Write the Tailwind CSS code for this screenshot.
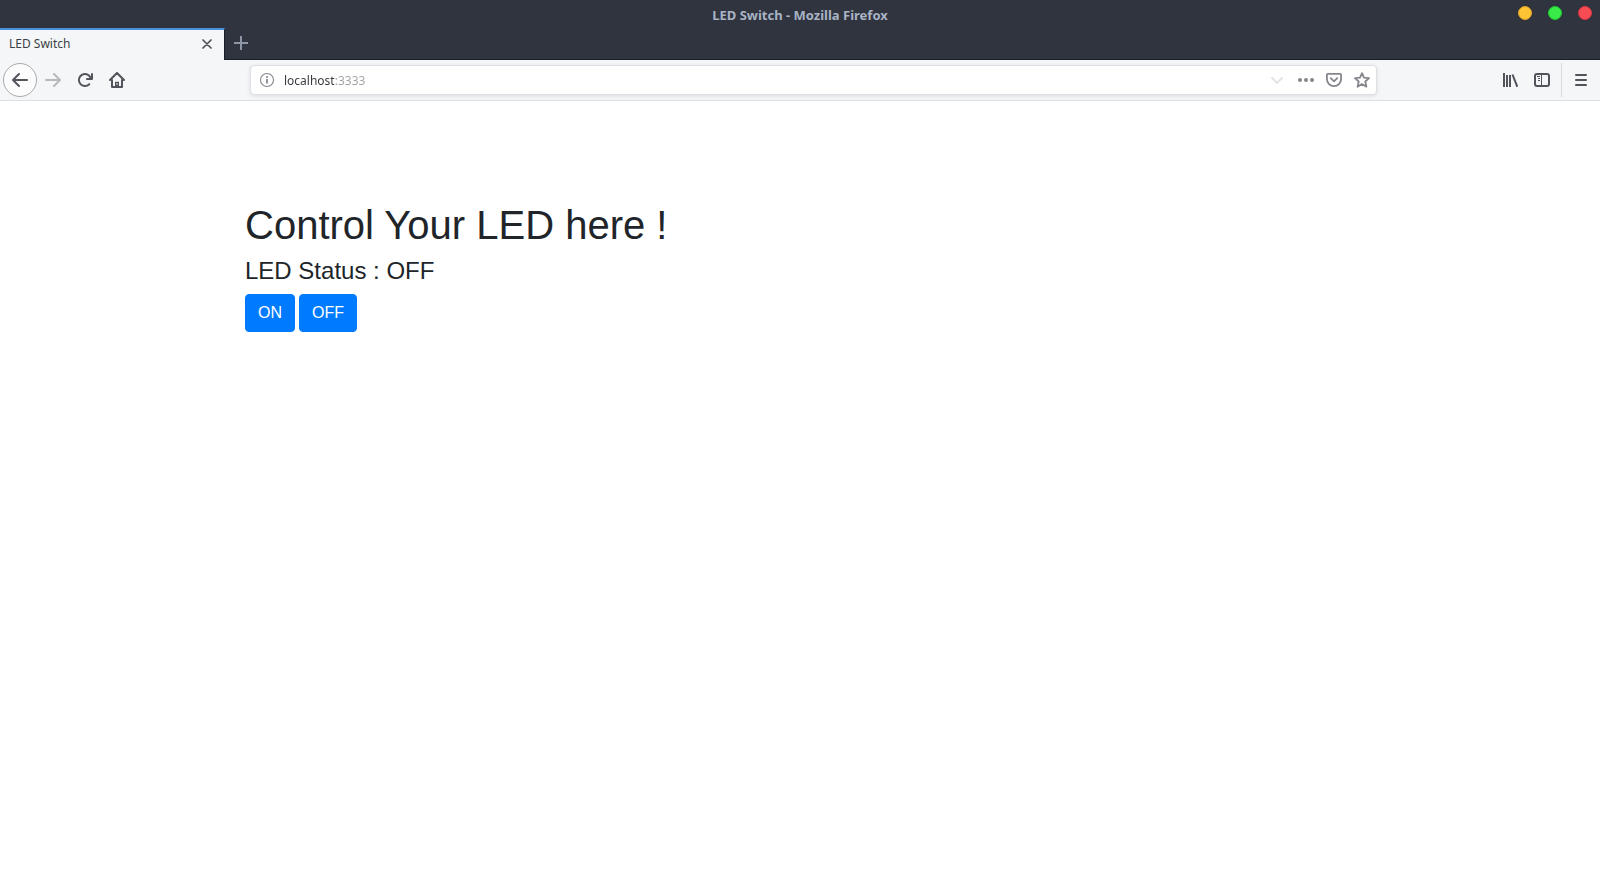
<!DOCTYPE html>
<html lang="en">
<head>
<meta charset="utf-8">
<meta name="viewport" content="width=device-width, initial-scale=1">
<title>LED Switch - Mozilla Firefox</title>
<script src="https://cdn.jsdelivr.net/npm/@tailwindcss/browser@4"></script>
</head>
<body class="min-h-screen bg-white font-['Noto_Sans',sans-serif] text-xs">
<header>
  <!-- Title bar -->
  <div class="grid h-7 grid-cols-[1fr_auto_1fr] items-end bg-[#2f343f] px-2">
    <span></span>
    <p class="text-[13px] leading-[26px] font-bold text-[#a9b3c4]">LED Switch - Mozilla Firefox</p>
    <div class="flex h-[26px] items-center justify-end gap-4 self-start">
      <button aria-label="Minimize" class="size-3.5 rounded-full border border-[#e0a325] bg-[#fdc435]"></button>
      <button aria-label="Maximize" class="size-3.5 rounded-full border border-[#1fc92f] bg-[#38eb49]"></button>
      <button aria-label="Close" class="size-3.5 rounded-full border border-[#dd3440] bg-[#f84c55]"></button>
    </div>
  </div>

  <!-- Tab strip -->
  <div class="flex h-8 bg-[#2f343f]">
    <div class="flex w-[225px] items-center justify-between border-t-2 border-r border-t-[#4a90d9] border-r-[#1c1f26] bg-[#f5f6f7] pr-3 pb-0.5 pl-[9px]">
      <span class="text-[#3b3e45]">LED Switch</span>
      <button aria-label="Close tab" class="text-[#4e5157]">
        <svg class="size-2.5" viewBox="0 0 10 10" fill="none" stroke="currentColor" stroke-width="1.7" stroke-linecap="round"><path d="M1 1l8 8M9 1l-8 8"/></svg>
      </button>
    </div>
    <div class="flex flex-1 items-center border-b border-[#1c1f26] pb-0.5 pl-[9px]">
      <button aria-label="New tab" class="text-[#8d97a8]">
        <svg class="size-3.5" viewBox="0 0 14 14" fill="none" stroke="currentColor" stroke-width="2"><path d="M7 0v14M0 7h14"/></svg>
      </button>
    </div>
  </div>

  <!-- Navigation toolbar -->
  <nav class="flex h-[41px] items-center border-b border-[#dcdfe6] bg-[#f5f6f8] pr-[11px] pl-[3px] text-[#53545b]">
    <button aria-label="Back" class="flex size-[34px] items-center justify-center rounded-full border border-[#a9aaad] bg-[#fcfcfd]">
      <svg class="size-4" viewBox="0 0 16 16" fill="currentColor"><path d="M15 7H3.414l4.293-4.293a1 1 0 0 0-1.414-1.414l-6 6a1 1 0 0 0 0 1.414l6 6a1 1 0 0 0 1.414-1.414L3.414 9H15a1 1 0 0 0 0-2z"/></svg>
    </button>
    <button aria-label="Forward" disabled class="ml-2 text-[#b8b9bc]">
      <svg class="size-4" viewBox="0 0 16 16" fill="currentColor"><path d="M1 7h11.586L8.293 2.707a1 1 0 0 1 1.414-1.414l6 6a1 1 0 0 1 0 1.414l-6 6a1 1 0 0 1-1.414-1.414L12.586 9H1a1 1 0 0 1 0-2z"/></svg>
    </button>
    <button aria-label="Reload" class="ml-4">
      <svg class="size-4" viewBox="0 0 16 16" fill="currentColor"><path d="M15 1a1 1 0 0 0-1 1v2.418A6.995 6.995 0 1 0 8 15a6.954 6.954 0 0 0 4.95-2.05 1 1 0 0 0-1.414-1.414A5.019 5.019 0 1 1 12.549 6H10a1 1 0 0 0 0 2h5a1 1 0 0 0 1-1V2a1 1 0 0 0-1-1z"/></svg>
    </button>
    <button aria-label="Home" class="ml-4">
      <svg class="size-4" viewBox="0 0 16 16" fill="none" stroke="currentColor" stroke-width="2" stroke-linecap="round" stroke-linejoin="round"><path d="M1 8l7-7 7 7M3 8v7h10V8"/><path d="M6 15v-5.2h4V15z" fill="currentColor" stroke="none"/><path d="M8 11.5v1" stroke="#f5f6f8" stroke-width="1"/></svg>
    </button>

    <div class="mr-[125px] ml-[125px] flex h-[30px] flex-1 items-center rounded-sm border border-[#dcdfe3] bg-white pr-1.5 pl-2 text-[#85868b] shadow-[0_1px_4px_rgba(0,0,0,0.1)]">
      <button aria-label="Site information">
        <svg class="size-4" viewBox="0 0 16 16" fill="none" stroke="currentColor"><circle cx="8" cy="8" r="6.5" stroke-width="1.1"/><path d="M8 7v4.5" stroke-width="1.8"/><circle cx="8" cy="4.9" r="1" fill="currentColor" stroke="none"/></svg>
      </button>
      <input aria-label="Address" type="text" value="localhost:3333" class="ml-[9px] h-5 min-w-0 flex-1 bg-linear-to-r from-[#35363b] from-[51px] to-[#a0a1a5] to-[51px] bg-clip-text text-transparent caret-[#35363b] outline-none">
      <button aria-label="Show history" class="text-[#e4e4e6]">
        <svg class="size-4" viewBox="0 0 16 16" fill="none" stroke="currentColor" stroke-width="2" stroke-linecap="round" stroke-linejoin="round"><path d="M3 6l5 5 5-5"/></svg>
      </button>
      <button aria-label="Page actions" class="ml-[13px]">
        <svg class="size-4" viewBox="0 0 16 16" fill="currentColor"><circle cx="2" cy="8" r="2"/><circle cx="8" cy="8" r="2"/><circle cx="14" cy="8" r="2"/></svg>
      </button>
      <button aria-label="Save to Pocket" class="ml-3">
        <svg class="size-4" viewBox="0 0 16 16" fill="none" stroke="currentColor" stroke-width="1.8" stroke-linecap="round" stroke-linejoin="round"><path d="M1.9 1.9h12.2a1 1 0 0 1 1 1V7a7.1 7.1 0 0 1-14.2 0V2.900a1 1 0 0 1 1-1z"/><path d="M4.800 6.200L8 9.300l3.200-3.100"/></svg>
      </button>
      <button aria-label="Bookmark this page" class="ml-3">
        <svg class="size-4" viewBox="0 0 16 16" fill="none" stroke="currentColor" stroke-width="1.800" stroke-linejoin="round"><path d="M8 1.200l2 4.500 5 .5-3.700 3.300 1.100 5.200L8 12.100l-4.400 2.600 1.100-5.200L1 6.200l5-.5z"/></svg>
      </button>
    </div>

    <button aria-label="Library">
      <svg class="size-4" viewBox="0 0 16 16" fill="none" stroke="currentColor" stroke-width="2"><path d="M2 1v14M5 3v12M8 3v12"/><path d="M10.500 2.500l4.800 12.300"/></svg>
    </button>
    <button aria-label="Sidebars" class="ml-4">
      <svg class="size-4" viewBox="0 0 16 16" fill="none" stroke="currentColor"><rect x="1" y="2" width="14" height="12" rx="2" stroke-width="2"/><path d="M7.500 2v12M3 4.500h3M4 6.500h2M4 8.500h2" stroke-width="1"/></svg>
    </button>
    <span class="ml-[11px] h-[34px] w-px bg-[#d7dae0]"></span>
    <button aria-label="Menu" class="ml-[11px]">
      <svg class="size-4" viewBox="0 0 16 16" fill="none" stroke="currentColor" stroke-width="2" stroke-linecap="round"><path d="M3 3h10M3 8h10M3 13h10"/></svg>
    </button>
  </nav>
</header>

<main class="mx-auto max-w-[1140px] px-[15px] pt-[100px] font-['Liberation_Sans',sans-serif] text-[#212529]">
  <h1 class="mb-2 text-[40px] leading-[48px]">Control Your LED here !</h1>
  <h2 class="mb-2.5 text-2xl leading-[27px]">LED Status : OFF</h2>
  <div class="flex gap-1 text-base text-white">
    <button class="rounded border border-[#007bff] bg-[#007bff] px-3 py-1.5">ON</button>
    <button class="rounded border border-[#007bff] bg-[#007bff] px-3 py-1.5">OFF</button>
  </div>
</main>
</body>
</html>
